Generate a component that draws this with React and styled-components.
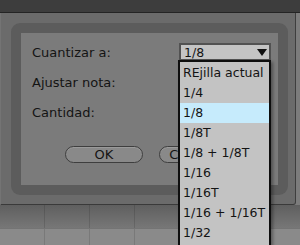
import React from 'react';
import styled, { createGlobalStyle } from 'styled-components';

const GlobalStyle = createGlobalStyle`
  html, body {
    margin: 0;
    padding: 0;
    background: #7c7c7c;
  }
`;

const StyledPage = styled.div`
  width: 300px;
  height: 245px;
  overflow: hidden;
  display: flex;
  flex-direction: column;
  font-family: 'DejaVu Sans', 'Liberation Sans', sans-serif;
  font-size: 13px;
  color: #141414;
`;

const StyledTopBar = styled.div`
  height: 12px;
  flex-shrink: 0;
  background: #3d3d3d;
  border-bottom: 1px solid #242424;
`;

const StyledDialog = styled.div`
  width: 296px;
  height: 192px;
  flex-shrink: 0;
  box-sizing: border-box;
  padding: 10px 7px 9px 10px;
  background: #6b6b6b;
  border-left: 1px solid #747474;
  border-right: 1px solid #3e3e3e;
  border-bottom: 1px solid #3a3a3a;
  border-bottom-right-radius: 3px;
`;

const StyledFrame = styled.div`
  height: 100%;
  box-sizing: border-box;
  padding: 10px;
  background: #5c5c5c;
  border-radius: 9px;
`;

const StyledPanel = styled.div`
  height: 100%;
  box-sizing: border-box;
  padding: 10px 11px;
  display: flex;
  flex-direction: column;
  background: #7b7b7b;
`;

const StyledRow = styled.div`
  display: flex;
  align-items: center;
  height: 18px;
  margin-bottom: 12px;
`;

const StyledLabel = styled.span`
  width: 147px;
  flex-shrink: 0;
  white-space: nowrap;
`;

const StyledSelectWrapper = styled.div`
  position: relative;
`;

const StyledSelect = styled.div`
  width: 92px;
  height: 18px;
  box-sizing: border-box;
  display: flex;
  align-items: center;
  justify-content: space-between;
  padding: 0 2px 0 3px;
  font-size: 12.5px;
  background: #c4c4c4;
  border: 2px solid #525252;
`;

const StyledArrow = styled.svg`
  width: 10px;
  height: 7px;
`;

const StyledList = styled.ul`
  position: absolute;
  top: 17px;
  left: -1px;
  width: 93px;
  margin: 0;
  padding: 1px 0 6px;
  list-style: none;
  box-sizing: border-box;
  font-size: 12.5px;
  background: #c3c3c3;
  border: 2px solid #0e0e0e;
  box-shadow: 2px 2px 3px rgba(0, 0, 0, 0.35);
  z-index: 2;
`;

const StyledItem = styled.li`
  height: 20px;
  line-height: 20px;
  padding-left: 3px;
  white-space: nowrap;
  background: ${({ selected }) => (selected ? '#c6ebfc' : 'transparent')};
`;

const StyledButtons = styled.div`
  display: flex;
  gap: 16px;
  margin-top: 13px;
  padding-left: 33px;
`;

const StyledButton = styled.button`
  width: 78px;
  height: 17px;
  padding: 0;
  font-family: inherit;
  font-size: 13px;
  line-height: 13px;
  color: #141414;
  background: #898989;
  border: 1px solid #3e3e3e;
  border-radius: 9px;
  box-shadow: inset 0 1px 0 #9a9a9a;
`;

const StyledGround = styled.div`
  flex: 1;
  display: flex;
  flex-direction: column;
`;

const StyledLane = styled.div`
  display: flex;
  height: ${({ height }) => height}px;
  background: ${({ tone }) => tone};
  border-bottom: 1px solid #747474;
`;

const StyledCell = styled.div`
  width: 44px;
  flex-shrink: 0;
  border-right: 1px solid rgba(0, 0, 0, 0.12);
`;

const options = [
  'REjilla actual',
  '1/4',
  '1/8',
  '1/8T',
  '1/8 + 1/8T',
  '1/16',
  '1/16T',
  '1/16 + 1/16T',
  '1/32',
];

const lanes = [
  { height: 23, tone: 'linear-gradient(#5f5f5f, #777777)' },
  { height: 20, tone: '#8a8a8a' },
];

const App = () => (
  <StyledPage>
    <GlobalStyle />
    <StyledTopBar />

    <StyledDialog>
      <StyledFrame>
        <StyledPanel>
          <StyledRow>
            <StyledLabel>Cuantizar a:</StyledLabel>
            <StyledSelectWrapper>
              <StyledSelect>
                <span>1/8</span>
                <StyledArrow viewBox="0 0 10 7">
                  <path d="M0 0 H10 L5 7 Z" fill="#111" />
                </StyledArrow>
              </StyledSelect>

              <StyledList>
                {options.map((option) => (
                  <StyledItem key={option} selected={option === '1/8'}>
                    {option}
                  </StyledItem>
                ))}
              </StyledList>
            </StyledSelectWrapper>
          </StyledRow>

          <StyledRow>
            <StyledLabel>Ajustar nota:</StyledLabel>
          </StyledRow>

          <StyledRow>
            <StyledLabel>Cantidad:</StyledLabel>
          </StyledRow>

          <StyledButtons>
            <StyledButton>OK</StyledButton>
            <StyledButton>Cancelar</StyledButton>
          </StyledButtons>
        </StyledPanel>
      </StyledFrame>
    </StyledDialog>

    <StyledGround>
      {lanes.map((lane) => (
        <StyledLane key={lane.height} height={lane.height} tone={lane.tone}>
          {Array.from({ length: 7 }).map((_, i) => (
            <StyledCell key={i} />
          ))}
        </StyledLane>
      ))}
    </StyledGround>
  </StyledPage>
);

export default App;
